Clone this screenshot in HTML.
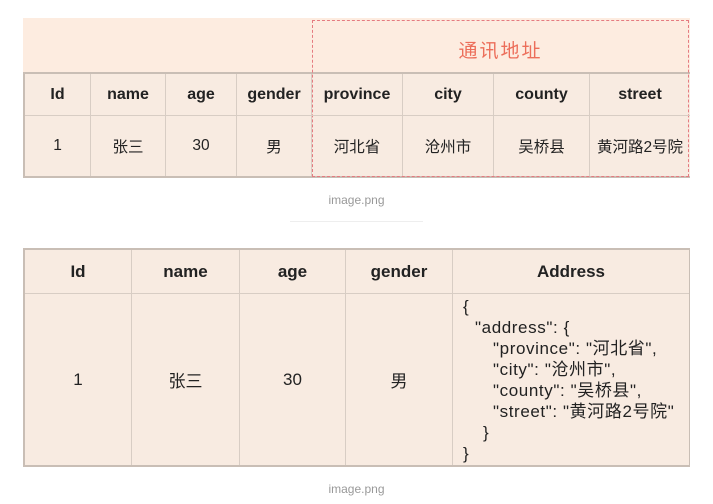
<!DOCTYPE html>
<html><head><meta charset="utf-8"><style>
body{margin:0;width:713px;height:504px;background:#fff;position:relative;overflow:hidden;font-family:"Liberation Sans","Noto Sans CJK SC",sans-serif;color:#222}
.a{position:absolute;box-sizing:border-box}
.c{position:absolute;box-sizing:border-box;display:flex;align-items:center;justify-content:center;font-size:15.5px;border-right:1px solid #d8cdc4;border-bottom:1px solid #d8cdc4}
.h{font-weight:bold;font-size:16px}
.cap{position:absolute;width:713px;text-align:center;font-size:12px;color:#999}
</style></head><body>
<div class="a" style="left:23px;top:18px;width:667px;height:160px;background:#fdece0"></div>
<div class="a" style="left:23px;top:72px;width:667px;height:106px;background:#f8ebe1;border:1px solid #c9beb5;border-width:2px 0 2px 2px"></div>
<div class="a" style="left:312px;top:20px;width:377px;height:157px;border:1.5px dashed #e57b80"></div>
<div class="a" style="left:312px;top:36px;width:377px;text-align:center;font-size:19px;color:#ec6e5a;letter-spacing:2px">通讯地址</div>
<div class="c h" style="left:25px;top:74px;width:66px;height:42px">Id</div>
<div class="c h" style="left:91px;top:74px;width:75px;height:42px">name</div>
<div class="c h" style="left:166px;top:74px;width:71px;height:42px">age</div>
<div class="c h" style="left:237px;top:74px;width:75px;height:42px">gender</div>
<div class="c h" style="left:312px;top:74px;width:91px;height:42px">province</div>
<div class="c h" style="left:403px;top:74px;width:91px;height:42px">city</div>
<div class="c h" style="left:494px;top:74px;width:96px;height:42px">county</div>
<div class="c h" style="left:590px;top:74px;width:100px;height:42px;border-right:0">street</div>
<div class="c" style="left:25px;top:116px;width:66px;height:60px;border-bottom:0">1</div>
<div class="c" style="left:91px;top:116px;width:75px;height:60px;border-bottom:0">张三</div>
<div class="c" style="left:166px;top:116px;width:71px;height:60px;border-bottom:0">30</div>
<div class="c" style="left:237px;top:116px;width:75px;height:60px;border-bottom:0">男</div>
<div class="c" style="left:312px;top:116px;width:91px;height:60px;border-bottom:0">河北省</div>
<div class="c" style="left:403px;top:116px;width:91px;height:60px;border-bottom:0">沧州市</div>
<div class="c" style="left:494px;top:116px;width:96px;height:60px;border-bottom:0">吴桥县</div>
<div class="c" style="left:590px;top:116px;width:100px;height:60px;border:0">黄河路2号院</div>
<div class="cap" style="top:193px">image.png</div>
<div class="a" style="left:290px;top:221px;width:133px;height:1px;background:#eee"></div>

<div class="a" style="left:23px;top:248px;width:667px;height:219px;background:#f8ebe1;border:2px solid #c9beb5;border-right:1px solid #c9beb5"></div>
<div class="c h" style="left:25px;top:250px;width:107px;height:44px;font-size:17px">Id</div>
<div class="c h" style="left:132px;top:250px;width:108px;height:44px;font-size:17px">name</div>
<div class="c h" style="left:240px;top:250px;width:106px;height:44px;font-size:17px">age</div>
<div class="c h" style="left:346px;top:250px;width:107px;height:44px;font-size:17px">gender</div>
<div class="c h" style="left:453px;top:250px;width:236px;height:44px;font-size:17px;border-right:0">Address</div>
<div class="c" style="left:25px;top:294px;width:107px;height:171px;border-bottom:0;font-size:17px">1</div>
<div class="c" style="left:132px;top:294px;width:108px;height:171px;border-bottom:0;font-size:17px">张三</div>
<div class="c" style="left:240px;top:294px;width:106px;height:171px;border-bottom:0;font-size:17px">30</div>
<div class="c" style="left:346px;top:294px;width:107px;height:171px;border-bottom:0;font-size:17px">男</div>
<div class="a" style="left:463px;top:296px;font-size:17px;line-height:21px;white-space:nowrap;letter-spacing:0.6px">
<div>{</div>
<div style="padding-left:12px">"address": {</div>
<div style="padding-left:30px">"province": "河北省",</div>
<div style="padding-left:30px">"city": "沧州市",</div>
<div style="padding-left:30px">"county": "吴桥县",</div>
<div style="padding-left:30px">"street": "黄河路2号院"</div>
<div style="padding-left:20px">}</div>
<div>}</div>
</div>
<div class="cap" style="top:482px">image.png</div>
</body></html>
